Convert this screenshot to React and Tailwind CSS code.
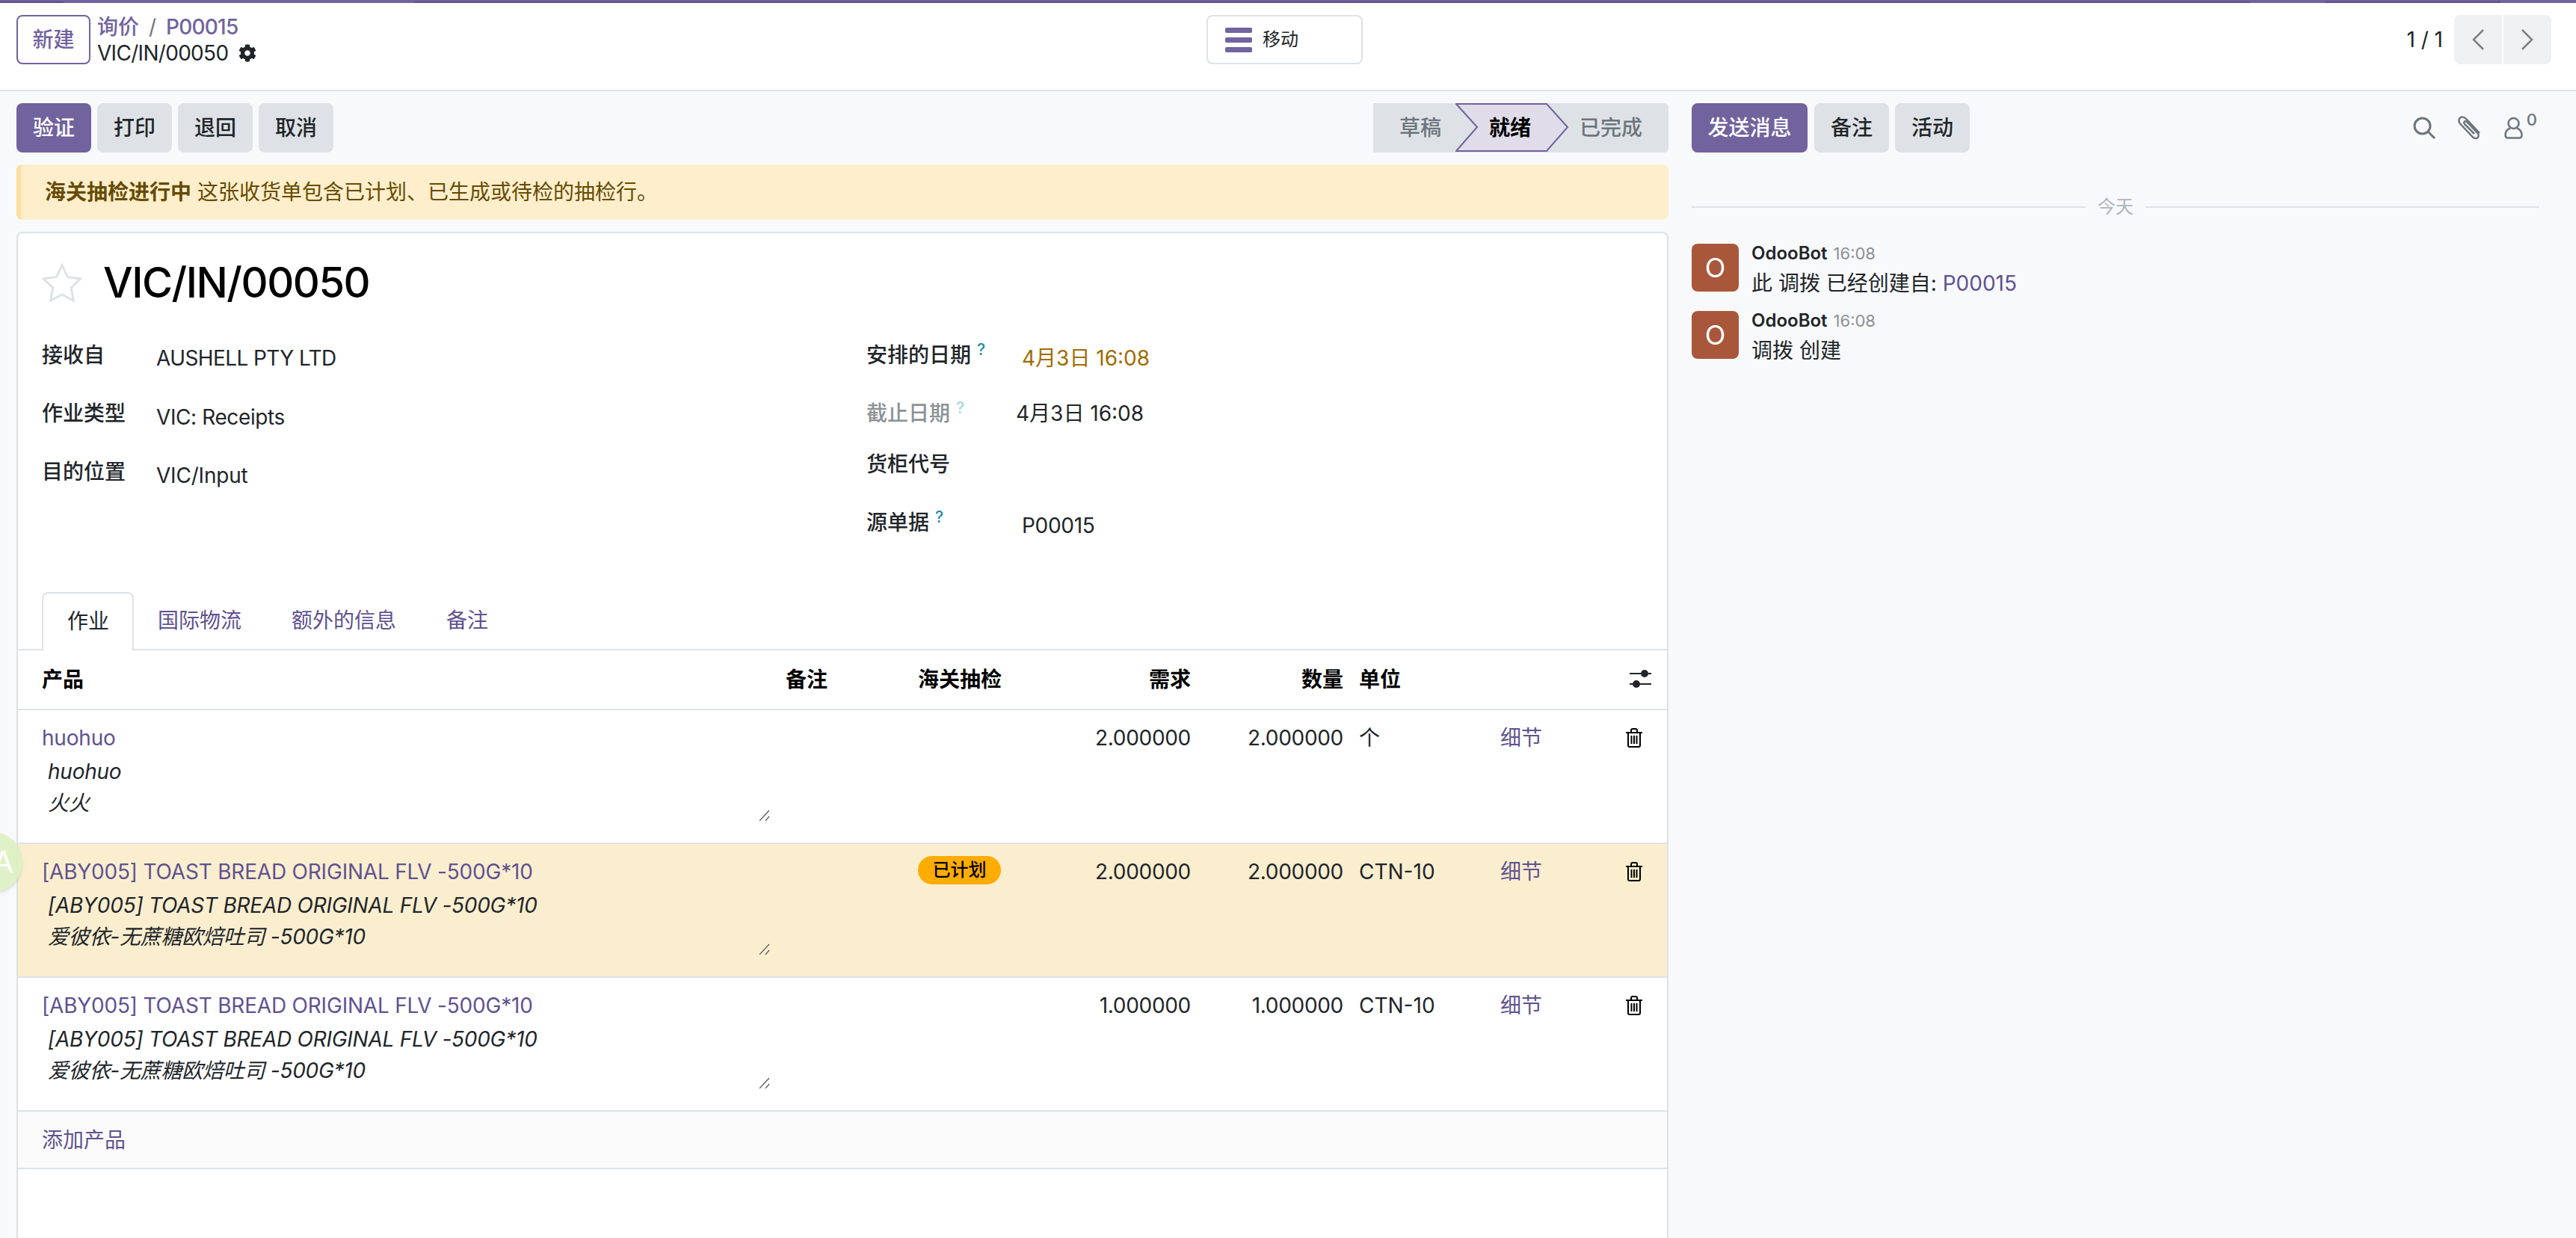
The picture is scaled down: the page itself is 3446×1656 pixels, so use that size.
import React from 'react';
import { FaCog } from 'react-icons/fa';

const rows = [
  { id: 1, product: 'huohuo', desc: 'huohuo\n火火', demand: '2.000000', qty: '2.000000', uom: '个' },
  {
    id: 2,
    product: '[ABY005] TOAST BREAD ORIGINAL FLV -500G*10',
    desc: '[ABY005] TOAST BREAD ORIGINAL FLV -500G*10\n爱彼依-无蔗糖欧焙吐司 -500G*10',
    demand: '2.000000',
    qty: '2.000000',
    uom: 'CTN-10',
    planned: true,
  },
  {
    id: 3,
    product: '[ABY005] TOAST BREAD ORIGINAL FLV -500G*10',
    desc: '[ABY005] TOAST BREAD ORIGINAL FLV -500G*10\n爱彼依-无蔗糖欧焙吐司 -500G*10',
    demand: '1.000000',
    qty: '1.000000',
    uom: 'CTN-10',
  },
];

const gridCols = 'grid grid-cols-[995px_177px_190px_175px_204px_210px_168px_1fr] pl-[32px]';

function Help({ pale }) {
  return (
    <sup className={`ml-[8px] text-[21px] font-medium leading-none ${pale ? 'text-[#a9d3df]' : 'text-[#1d8aa8]'}`}>?</sup>
  );
}

function TrashIcon() {
  return (
    <svg width="22" height="26" viewBox="0 0 22 26" fill="none" stroke="#000" strokeWidth="2">
      <path d="M0 6h22" />
      <path d="M7 6V3a2 2 0 0 1 2-2h4a2 2 0 0 1 2 2v3" />
      <path d="M3 6v17a2 2 0 0 0 2 2h12a2 2 0 0 0 2-2V6" />
      <path d="M7.500 10v11M11 10v11M14.500 10v11" />
    </svg>
  );
}

function SlidersIcon() {
  return (
    <svg width="30" height="30" viewBox="0 0 30 30" fill="#212529">
      <rect x="0" y="6" width="29" height="2" />
      <rect x="0" y="20" width="29" height="2" />
      <circle cx="20" cy="7" r="5" />
      <circle cx="9" cy="21" r="5" />
    </svg>
  );
}

function FormRow({ label, height, labelClass = '', children }) {
  return (
    <div className={`flex items-start ${height}`}>
      <div className={`text-[28px] leading-[42px] font-medium ${labelClass}`}>{label}</div>
      {children}
    </div>
  );
}

function ProductRow({ row }) {
  return (
    <div className={`${gridCols} h-[179px] border-b-2 border-[#dee2e6] pt-[16px] ${row.planned ? 'bg-[#fbeecf]' : ''}`}>
      <div>
        <div className="text-[#5f5290] leading-[42px] tracking-[-0.2px]">{row.product}</div>
        <div className="relative mt-[4px] h-[86px] w-[974px]">
          <textarea
            readOnly
            value={row.desc}
            className="block h-full w-full resize-none overflow-hidden bg-transparent pl-[8px] text-[28px] leading-[41.500px] italic tracking-[-0.25px] text-[#212529] outline-none"
          />
          <svg className="absolute bottom-0 right-0" width="15" height="15" viewBox="0 0 15 15" fill="none" stroke="#555" strokeWidth="1.200">
            <path d="M1 15L14 1M9 15L14 9" />
          </svg>
        </div>
      </div>
      <div />
      <div>
        {row.planned ? (
          <span className="flex h-[38px] w-[111px] items-center justify-center rounded-full bg-[#ffac00] text-[24px] font-medium text-black">
            已计划
          </span>
        ) : null}
      </div>
      <div className="text-right leading-[42px] tracking-[-0.3px]">{row.demand}</div>
      <div className="text-right leading-[42px] tracking-[-0.3px]">{row.qty}</div>
      <div className="pl-[21px] leading-[42px]">{row.uom}</div>
      <div className="leading-[42px] text-[#5f5290]">细节</div>
      <div className="pt-[8px]">
        <TrashIcon />
      </div>
    </div>
  );
}

function Message({ body, link, top }) {
  return (
    <div className={`flex h-[64px] ${top}`}>
      <div className="flex h-[64px] w-[63px] items-center justify-center rounded-[8px] bg-[#a9573a] text-[36px] text-white">O</div>
      <div className="ml-[17px]">
        <div className="flex items-baseline leading-[26px]">
          <span className="text-[24px] font-semibold text-[#212529]">OdooBot</span>
          <span className="ml-[8px] text-[22px] text-[#8b9197]">16:08</span>
        </div>
        <div className="mt-[6px] text-[28px] leading-[42px]">
          {body}
          {link ? <span className="text-[#5f5290]"> {link}</span> : null}
        </div>
      </div>
    </div>
  );
}

export default function App() {
  return (
    <div className="relative flex h-screen flex-col overflow-hidden bg-[#f8f9fa] font-[Inter,'Noto_Sans_CJK_SC',sans-serif] text-[28px] text-[#212529]">
      {/* top progress line */}
      <div className="h-[4px] bg-[#71639e] pt-[2px]">
        <div className="flex h-[2px]">
          <div className="w-[85px] bg-[#5c4f85]" />
          <div className="w-[469px]" />
          <div className="w-[2456px] bg-[#5c4f85]" />
          <div className="w-[100px]" />
          <div className="w-[235px] bg-[#5c4f85]" />
        </div>
      </div>

      <header className="flex h-[118px] items-start border-b-2 border-[#dee2e6] bg-white pt-[16px]">
        <div className="flex w-[1614px] items-start pl-[22px]">
          <button className="flex h-[66px] w-[99px] items-center justify-center rounded-[8px] border-2 border-[#71639e] text-[28px] font-medium text-[#71639e]">
            新建
          </button>
          <div className="ml-[9px] mt-[-2px]">
            <div className="flex h-[36px] items-center font-medium text-[#71639e]">
              <span>询价</span>
              <span className="mx-[13px] font-normal text-[#6c757d]">/</span>
              <span className="tracking-[-0.8px]">P00015</span>
            </div>
            <div className="flex h-[34px] items-center">
              <span className="tracking-[-0.7px]">VIC/IN/00050</span>
              <FaCog className="ml-[14px] h-[24px] w-[24px] text-[#212529]" />
            </div>
          </div>
        </div>
        <button className="flex h-[66px] w-[209px] items-center rounded-[8px] border-2 border-[#dee2e6] bg-white pl-[23px]">
          <span className="flex w-[36px] flex-col gap-[6px]">
            <span className="h-[7px] rounded-[2px] bg-[#71639e]" />
            <span className="h-[7px] rounded-[2px] bg-[#71639e]" />
            <span className="h-[7px] rounded-[2px] bg-[#71639e]" />
          </span>
          <span className="ml-[14px] text-[24px]">移动</span>
        </button>
        <div className="flex flex-1 items-center justify-end pr-[33px]">
          <span className="mr-[15px]">1 / 1</span>
          <button className="flex h-[66px] w-[64px] items-center justify-center rounded-l-[8px] bg-[#eff0f2]">
            <svg width="16" height="28" viewBox="0 0 16 28" fill="none" stroke="#7f7f7f" strokeWidth="2.500">
              <path d="M15 1L2 14l13 13" />
            </svg>
          </button>
          <button className="ml-[2px] flex h-[66px] w-[64px] items-center justify-center rounded-r-[8px] bg-[#eff0f2]">
            <svg width="16" height="28" viewBox="0 0 16 28" fill="none" stroke="#7f7f7f" strokeWidth="2.500">
              <path d="M1 1l13 13L1 27" />
            </svg>
          </button>
        </div>
      </header>

      <main className="flex min-h-0 flex-1">
        {/* form column */}
        <div className="flex w-[2263px] flex-col pl-[22px] pr-[31px] pt-[16px]">
          <div className="flex h-[66px] items-center justify-between">
            <div className="flex gap-[8px]">
              <button className="h-[66px] w-[100px] rounded-[8px] bg-[#71639e] font-medium text-white">验证</button>
              <button className="h-[66px] w-[100px] rounded-[8px] bg-[#dee2e6] font-medium">打印</button>
              <button className="h-[66px] w-[100px] rounded-[8px] bg-[#dee2e6] font-medium">退回</button>
              <button className="h-[66px] w-[100px] rounded-[8px] bg-[#dee2e6] font-medium">取消</button>
            </div>
            <div className="flex h-[66px] w-[395px] rounded-r-[6px] bg-[#dee2e6] font-medium">
              <div className="flex w-[110px] items-center pl-[35px] text-[#6c757d]">草稿</div>
              <div className="relative flex w-[150px] items-center pl-[45px] font-bold text-black">
                <svg className="absolute left-0 top-0" width="152" height="66" viewBox="0 0 152 66">
                  <path d="M1 1H122L150 32L122 64H1L29 32Z" fill="#e0dce9" stroke="#71639e" strokeWidth="2" />
                </svg>
                <span className="relative">就绪</span>
              </div>
              <div className="flex flex-1 items-center pl-[16px] text-[#6c757d]">已完成</div>
            </div>
          </div>

          <div className="mt-[16px] flex h-[74px] items-center rounded-[8px] border-l-[6px] border-[#ffdf9f] bg-[#ffeecc] pl-[32px] text-[#664b00]">
            <b className="font-bold">海关抽检进行中</b>
            <span className="ml-[8px]">这张收货单包含已计划、已生成或待检的抽检行。</span>
          </div>

          <section className="mt-[16px] flex-1 rounded-t-[8px] border-2 border-b-0 border-[#dee2e6] bg-white">
            <div className="flex h-[132px] items-center pl-[32px]">
              <svg width="54" height="52" viewBox="0 0 54 52" fill="none" stroke="#dee2e6" strokeWidth="3">
                <path d="M27 3l7.500 15.500 17 2.500-12.300 12 3 17L27 42l-15.200 8 3-17L2.500 21l17-2.500z" />
              </svg>
              <h1 className="ml-[28px] text-[56px] font-medium leading-none tracking-[-1.5px] text-black">VIC/IN/00050</h1>
            </div>

            <div className="mt-[10px] flex h-[338px]">
              <div className="w-[1135px] pl-[32px]">
                <FormRow label="接收自" height="h-[78px]" labelClass="w-[153px]">
                  <div className="mt-[4px] leading-[42px] tracking-[-0.6px]">AUSHELL PTY LTD</div>
                </FormRow>
                <FormRow label="作业类型" height="h-[78px]" labelClass="w-[153px]">
                  <div className="mt-[5px] leading-[42px] tracking-[-0.4px]">VIC: Receipts</div>
                </FormRow>
                <FormRow label="目的位置" height="h-[78px]" labelClass="w-[153px]">
                  <div className="mt-[5px] leading-[42px] tracking-[-0.2px]">VIC/Input</div>
                </FormRow>
              </div>
              <div>
                <FormRow
                  label={<>安排的日期<Help /></>}
                  height="h-[78px]"
                  labelClass="w-[208px]"
                >
                  <div className="mt-[4px] leading-[42px] text-[#a06c00]">4月3日 16:08</div>
                </FormRow>
                <FormRow
                  label={<>截止日期<Help pale /></>}
                  height="h-[68px]"
                  labelClass="w-[200px] text-[#8b9197]"
                >
                  <div className="leading-[42px]">4月3日 16:08</div>
                </FormRow>
                <FormRow label="货柜代号" height="h-[78px]" />
                <FormRow
                  label={<>源单据<Help /></>}
                  height="h-[78px]"
                  labelClass="w-[208px]"
                >
                  <div className="mt-[4px] leading-[42px] tracking-[-0.3px]">P00015</div>
                </FormRow>
              </div>
            </div>

            <div className="flex h-[78px] border-b-2 border-[#dee2e6] pl-[32px]">
              <div className="flex h-[78px] items-center rounded-t-[8px] border-2 border-b-0 border-[#dee2e6] bg-white pb-[2px] pl-[32px] pr-[31px]">作业</div>
              <div className="flex h-[76px] items-center pl-[32px] pr-[33px] text-[#5f5290]">国际物流</div>
              <div className="ml-[1px] flex h-[76px] items-center px-[33px] text-[#5f5290]">额外的信息</div>
              <div className="ml-[1px] flex h-[76px] items-center px-[33px] text-[#5f5290]">备注</div>
            </div>

            <div className={`${gridCols} h-[80px] items-center border-b-2 border-[#dee2e6] font-bold text-black`}>
              <div>产品</div>
              <div>备注</div>
              <div>海关抽检</div>
              <div className="text-right">需求</div>
              <div className="text-right">数量</div>
              <div className="pl-[21px]">单位</div>
              <div />
              <div className="pl-[5px]">
                <SlidersIcon />
              </div>
            </div>

            {rows.map((row) => (
              <ProductRow key={row.id} row={row} />
            ))}

            <div className="flex h-[77px] items-center border-b-2 border-[#dee2e6] bg-[#fbfbfb] pl-[32px] text-[#5f5290]">添加产品</div>
          </section>
        </div>

        {/* chatter */}
        <aside className="w-[1134px] pt-[16px]">
          <div className="flex h-[66px] items-center">
            <button className="h-[66px] w-[155px] rounded-[8px] bg-[#71639e] font-medium text-white">发送消息</button>
            <button className="ml-[9px] h-[66px] w-[100px] rounded-[8px] bg-[#dee2e6] font-medium">备注</button>
            <button className="ml-[8px] h-[66px] w-[100px] rounded-[8px] bg-[#dee2e6] font-medium">活动</button>
            <div className="ml-auto flex items-center pr-[3px] text-[#6c757d]">
              <svg width="30" height="30" viewBox="0 0 30 30" fill="none" stroke="#6c757d" strokeWidth="3">
                <circle cx="12.500" cy="12.500" r="10.500" />
                <path d="M20 20l9 9" />
              </svg>
              <svg className="ml-[30px]" width="32" height="34" viewBox="0 0 32 34" fill="none" stroke="#6c757d" strokeWidth="2.500">
                <path d="M29 24L11 5C8 2 4 2 2.500 4S1 9 3.500 12l16 17c2 2 5 3 7 1s1-5-1-7L12 9c-1-1-3-1-3.500 0s0 2.500 1 3.500L22 25" />
              </svg>
              <svg className="ml-[30px]" width="25" height="30" viewBox="0 0 25 30" fill="none" stroke="#6c757d" strokeWidth="2.500">
                <circle cx="12.500" cy="9" r="7" />
                <path d="M8 15.500C4 17 1.500 20 1.500 24.500c0 3 1 4 3.500 4h15c2.500 0 3.500-1 3.500-4 0-4.500-2.500-7.500-6.500-9" />
              </svg>
              <span className="mb-[22px] ml-[5px] text-[22px] font-medium leading-none">0</span>
            </div>
          </div>

          <div className="mt-[59px] flex h-[28px] items-center">
            <div className="h-[2px] flex-1 bg-[#dee2e6]" />
            <span className="mx-[16px] text-[24px] text-[#adb5bd]">今天</span>
            <div className="h-[2px] flex-1 bg-[#dee2e6]" />
          </div>

          <Message top="mt-[35px]" body="此 调拨 已经创建自:" link="P00015" />
          <Message top="mt-[26px]" body="调拨 创建" />
        </aside>
      </main>

      {/* floating badge from a browser extension, over the page edge */}
      <div className="absolute left-[-50px] top-[1113px] flex h-[80px] w-[80px] items-center justify-end rounded-full bg-[#dcefc0]/90 pr-[40px] text-[40px] text-white shadow-md">
        <span className="mr-[-28px]">A</span>
      </div>
    </div>
  );
}
